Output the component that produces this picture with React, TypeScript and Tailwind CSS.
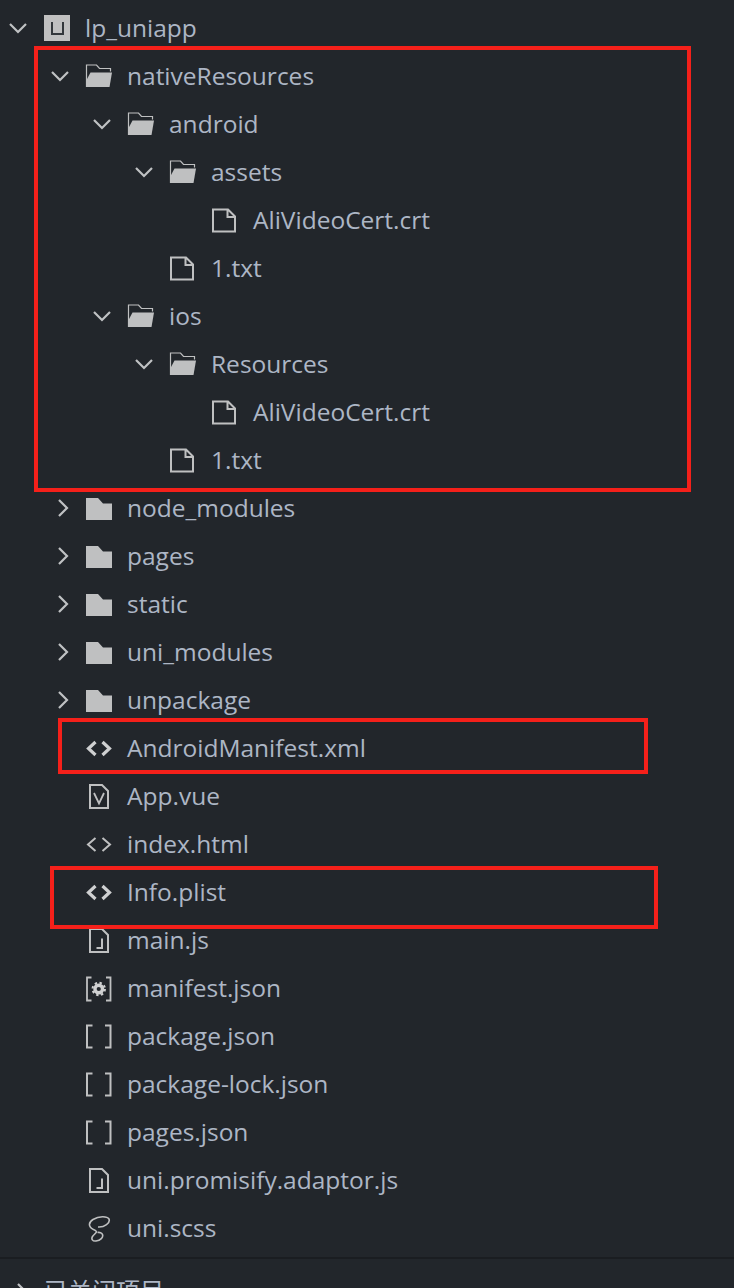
import type { ReactNode } from "react";

type IconName = "folderOpen" | "folder" | "file" | "code" | "codeBold" | "vue" | "js" | "gear" | "json" | "sass";

type Row = {
  name: string;
  depth: number;
  icon: IconName;
  arrow?: "open" | "closed";
};

const rows: Row[] = [
  { name: "nativeResources", depth: 0, icon: "folderOpen", arrow: "open" },
  { name: "android", depth: 1, icon: "folderOpen", arrow: "open" },
  { name: "assets", depth: 2, icon: "folderOpen", arrow: "open" },
  { name: "AliVideoCert.crt", depth: 3, icon: "file" },
  { name: "1.txt", depth: 2, icon: "file" },
  { name: "ios", depth: 1, icon: "folderOpen", arrow: "open" },
  { name: "Resources", depth: 2, icon: "folderOpen", arrow: "open" },
  { name: "AliVideoCert.crt", depth: 3, icon: "file" },
  { name: "1.txt", depth: 2, icon: "file" },
  { name: "node_modules", depth: 0, icon: "folder", arrow: "closed" },
  { name: "pages", depth: 0, icon: "folder", arrow: "closed" },
  { name: "static", depth: 0, icon: "folder", arrow: "closed" },
  { name: "uni_modules", depth: 0, icon: "folder", arrow: "closed" },
  { name: "unpackage", depth: 0, icon: "folder", arrow: "closed" },
  { name: "AndroidManifest.xml", depth: 0, icon: "codeBold" },
  { name: "App.vue", depth: 0, icon: "vue" },
  { name: "index.html", depth: 0, icon: "code" },
  { name: "Info.plist", depth: 0, icon: "codeBold" },
  { name: "main.js", depth: 0, icon: "js" },
  { name: "manifest.json", depth: 0, icon: "gear" },
  { name: "package.json", depth: 0, icon: "json" },
  { name: "package-lock.json", depth: 0, icon: "json" },
  { name: "pages.json", depth: 0, icon: "json" },
  { name: "uni.promisify.adaptor.js", depth: 0, icon: "js" },
  { name: "uni.scss", depth: 0, icon: "sass" },
];

function Arrow({ open }: { open: boolean }) {
  return (
    <svg width="20" height="20" viewBox="0 0 20 20" fill="none" stroke="#c0c2c4" strokeWidth="2.2">
      {open ? <path d="M2 6l8 8 8-8" /> : <path d="M9 2l8 8-8 8" />}
    </svg>
  );
}

function FileIcon({ name }: { name: IconName }) {
  const stroke = "#bfc0c1";
  let body: ReactNode = null;
  switch (name) {
    case "folderOpen":
      body = (
        <>
          <path d="M1.5 24V2h10l3 3.500h11v3" fill="none" stroke={stroke} strokeWidth="1.200" />
          <path d="M1 24h23.500L27 9.500H5.500L1 18z" fill={stroke} />
        </>
      );
      break;
    case "folder":
      body = <path d="M1 25V3h12l5 5.500h9V25z" fill={stroke} />;
      break;
    case "file":
      body = <path d="M2 24.500V2.500h15l7 7v15z M16.500 2.500v7.500h7.500" fill="none" stroke={stroke} strokeWidth="2" />;
      break;
    case "code":
      body = <path d="M10.500 7l-7.500 6.500 7.500 6.500 M17.500 7l7.500 6.500-7.500 6.500" fill="none" stroke={stroke} strokeWidth="2" />;
      break;
    case "codeBold":
      body = <path d="M10.500 7l-7 6.500 7 6.500 M17.500 7l7 6.500-7 6.500" fill="none" stroke="#cfd0d1" strokeWidth="3.200" />;
      break;
    case "vue":
      body = (
        <>
          <path d="M5 25V2h12l6 6v17z" fill="none" stroke={stroke} strokeWidth="2" />
          <path d="M9 10l5 10.500L19 10" fill="none" stroke={stroke} strokeWidth="1.800" />
        </>
      );
      break;
    case "js":
      body = (
        <>
          <path d="M5 25V2h12l6 6v17z" fill="none" stroke={stroke} strokeWidth="2" />
          <path d="M17 11.500V21h-5.500" fill="none" stroke={stroke} strokeWidth="2" />
        </>
      );
      break;
    case "gear":
      body = (
        <>
          <path d="M6.500 2.500H2v23h4.500 M21 2.500h4.500v23H21" fill="none" stroke={stroke} strokeWidth="1.800" />
          <circle cx="13.750" cy="14" r="3.800" fill="none" stroke="#d0d1d2" strokeWidth="3.400" />
          <circle cx="13.750" cy="14" r="6.200" fill="none" stroke="#d0d1d2" strokeWidth="2" strokeDasharray="2.400 2.470" />
        </>
      );
      break;
    case "json":
      body = <path d="M7.500 2.500H2v22h5.500 M20 2.500h5.500v22H20" fill="none" stroke={stroke} strokeWidth="2" />;
      break;
    case "sass":
      body = (
        <path
          d="M10.500 15.500C3.500 13 2.500 8 8 4.500 14 1 22 1 24 4c1.500 4-4.500 8.500-11 8 M10.500 15.500c2.500 2-1 3-3 6-1.500 2.500 0 5 3.500 4.500 4.500-0.500 7.500-3.500 6.500-6.500-0.500-1.500-3-2.500-5-2"
          fill="none"
          stroke={stroke}
          strokeWidth="1.600"
        />
      );
      break;
  }
  return (
    <svg width="27" height="27" viewBox="0 0 27 27" className="shrink-0">
      {body}
    </svg>
  );
}

function TreeRow({ row }: { row: Row }) {
  return (
    <div className="flex h-12 items-center pl-[50px]">
      <div style={{ width: row.depth * 42 }} className="shrink-0" />
      <div className="mr-[15px] w-5 shrink-0">{row.arrow && <Arrow open={row.arrow === "open"} />}</div>
      <FileIcon name={row.icon} />
      <span className="ml-[15px] whitespace-nowrap">{row.name}</span>
    </div>
  );
}

export default function App() {
  return (
    <div className="relative h-[1288px] w-[734px] overflow-hidden bg-[#22262b] pt-1 font-['Open_Sans','Noto_Sans',sans-serif] text-[24.5px] text-[#adb6c5]">
      <div className="flex h-12 items-center pl-[8px]">
        <Arrow open />
        <div className="ml-[16px] flex h-[26px] w-[26px] items-center justify-center bg-[#c0c0c0]">
          <div className="h-[13px] w-[13px] border-x-2 border-b-2 border-[#33373b]" />
        </div>
        <span className="ml-[15px]">lp_uniapp</span>
      </div>

      {rows.map((row, i) => (
        <TreeRow key={i} row={row} />
      ))}

      <div className="mt-[5px] flex h-12 items-center border-t-2 border-[#1a1d21] pl-[9px]">
        <div className="mt-[20px]">
          <Arrow open={false} />
        </div>
        <span className="ml-[15px] mt-[16px] font-['Noto_Sans_CJK_SC',sans-serif] text-[24px]">已关闭项目</span>
      </div>

      <div className="absolute left-[34px] top-[46px] h-[446px] w-[657px] border-4 border-[#f5201a]" />
      <div className="absolute left-[58px] top-[718px] h-[56px] w-[590px] border-4 border-[#f5201a]" />
      <div className="absolute left-[50px] top-[866px] h-[63px] w-[608px] border-4 border-[#f5201a]" />
    </div>
  );
}
